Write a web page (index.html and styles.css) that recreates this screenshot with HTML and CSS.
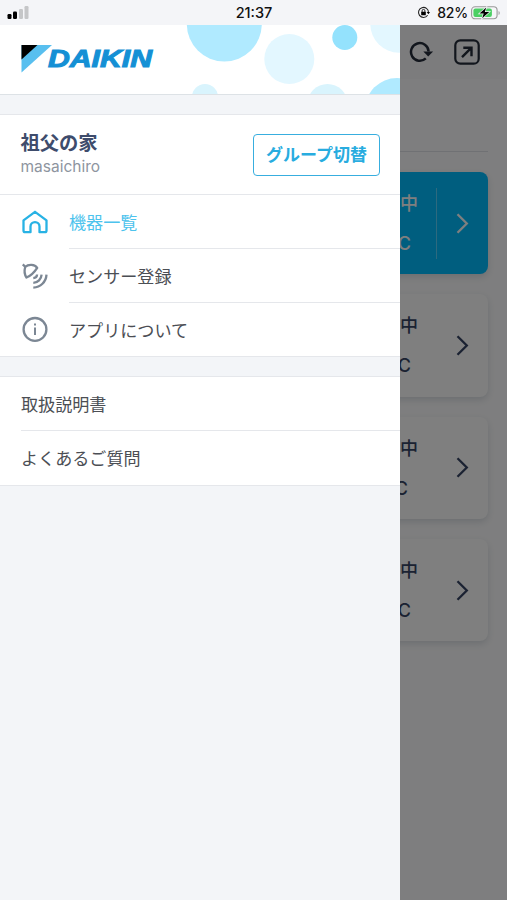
FILE: index.html
```html
<!DOCTYPE html>
<html lang="ja">
<head>
<meta charset="utf-8">
<title>DAIKIN</title>
<link rel="stylesheet" href="styles.css">
</head>
<body>
<div class="screen">
  <header class="status">
    <svg class="signal" width="24" height="14" viewBox="0 0 24 14"><rect x="0.5" y="8" width="4" height="5" rx="1.2"/><rect x="6" y="5.5" width="4" height="7.5" rx="1.2"/><rect class="off" x="12" y="3" width="4" height="10" rx="1.2"/><rect class="off" x="17.5" y="0" width="4" height="13" rx="1.2"/></svg>
    <span class="clock">21:37</span>
    <div class="power">
      <svg width="13" height="13" viewBox="0 0 13 13"><path d="M10.6 9.3A5 5 0 1 1 11.5 6.5" fill="none" stroke="#222" stroke-width="1.1"/><path d="M9.7 6h3.3l-1.6 2.3z"/><rect x="4.2" y="5.8" width="4.6" height="3.5" rx=".5"/><path d="M5.1 6V4.8a1.4 1.4 0 0 1 2.8 0V6" fill="none" stroke="#222"/></svg>
      <span class="percent">82%</span>
      <svg width="30" height="14" viewBox="0 0 30 14"><rect x=".6" y=".8" width="25.5" height="12" rx="3.5" fill="#f5f6f8" stroke="#999" stroke-width="1.1"/><rect x="2.4" y="2.6" width="18.5" height="8.4" rx="2" fill="#4bd064"/><path d="M27.5 5v4q1.4-.4 1.4-2t-1.4-2" fill="#aaa"/><path d="M15.2 1.6 8.5 7.6h4.2l-1.5 4.6 7-6.2h-4.4z" stroke="#f5f6f8" stroke-width="1.4" paint-order="stroke"/></svg>
    </div>
  </header>

  <div class="stage">
    <main class="app">
      <div class="toolbar">
        <svg width="26" height="24" viewBox="0 0 26 24" fill="none" stroke="#252c3a" stroke-width="2.5"><path d="M16.8 18.4A8.8 8.8 0 1 1 19.6 11.5"/><path d="M14.3 11.5h9.8l-4.9 5z" fill="#252c3a" stroke="none"/></svg>
        <svg class="open" width="26" height="26" viewBox="0 0 26 26" fill="none" stroke="#252c3a" stroke-width="2.2"><rect x="1.3" y="1.3" width="23.4" height="23.4" rx="5"/><path d="M8 18.2l9-9M9.3 8.7h8.2v8.5" stroke-width="2.4"/></svg>
      </div>
      <div class="heading"></div>
      <div class="cards">
        <section class="card active"><div class="reading"><span>中</span><span class="unit">C</span></div><div class="go"><svg width="14" height="22" viewBox="0 0 14 22"><path d="M1.5 1.2 10.8 10.5 1.5 19.8"/></svg></div></section>
        <section class="card"><div class="reading"><span>中</span><span class="unit">C</span></div><div class="go"><svg width="14" height="22" viewBox="0 0 14 22"><path d="M1.5 1.2 10.8 10.5 1.5 19.8"/></svg></div></section>
        <section class="card"><div class="reading"><span>中</span><span class="unit near">C</span></div><div class="go"><svg width="14" height="22" viewBox="0 0 14 22"><path d="M1.5 1.2 10.8 10.5 1.5 19.8"/></svg></div></section>
        <section class="card"><div class="reading"><span>中</span><span class="unit">C</span></div><div class="go"><svg width="14" height="22" viewBox="0 0 14 22"><path d="M1.5 1.2 10.8 10.5 1.5 19.8"/></svg></div></section>
      </div>
    </main>
    <div class="scrim"></div>

    <aside class="drawer">
      <div class="brand">
        <svg width="400" height="69" viewBox="0 0 400 69">
          <circle cx="224.3" cy="-1" r="37.5" fill="#b0eaff"/>
          <circle cx="289.3" cy="34" r="25" fill="#e3f7ff"/>
          <circle cx="344.8" cy="12.5" r="12.5" fill="#94e2fd"/>
          <circle cx="399" cy="-1" r="28.7" fill="#e3f7ff"/>
          <circle cx="205" cy="72" r="13" fill="#d9f4fd"/>
          <circle cx="327.5" cy="79" r="20" fill="#d9f4fd"/>
          <circle cx="397" cy="85" r="32" fill="#b0eaff"/>
          <path d="M21.5 20H52L21.5 47.5z" fill="#58bfef"/>
          <path d="M21.5 20H37.5L21.5 34.5z" fill="#000"/>
          <text class="wordmark" x="48" y="42.2" textLength="104" lengthAdjust="spacingAndGlyphs">DAIKIN</text>
        </svg>
      </div>
      <div class="profile">
        <div class="who"><strong>祖父の家</strong><span>masaichiro</span></div>
        <button class="switch">グループ切替</button>
      </div>
      <nav class="menu">
        <a class="item current"><svg width="28" height="28" viewBox="0 0 28 28"><path d="M2.5 12.3 14 3.8l11.5 8.5v10.2a1.7 1.7 0 0 1-1.7 1.7h-5.3v-5.6a4.5 4.5 0 0 0-9 0v5.6H4.2a1.7 1.7 0 0 1-1.7-1.7z"/></svg><span>機器一覧</span></a>
        <a class="item"><svg width="28" height="28" viewBox="0 0 28 28"><path d="M1.8 2.4 4.4 5M4.2 5C3.2 8.5 3.4 12.5 5.5 15.5 9 14 13.5 10 16.2 5.8 13.8 2.3 7.5 1.8 4.2 5zM12.3 16.2c2.2-.2 3.7-1.6 3.8-3.7M12.3 20.9c4.6-.2 8-3.7 8.3-8.2M12.3 25.6c7.2-.3 12.8-5.7 13.2-13"/></svg><span>センサー登録</span></a>
        <a class="item"><svg width="28" height="28" viewBox="0 0 28 28"><circle cx="14" cy="14.4" r="11.4"/><path d="M14 12.4v7.6M14 8.4v2.2" stroke-width="2"/></svg><span>アプリについて</span></a>
      </nav>
      <nav class="menu links">
        <a class="item"><span>取扱説明書</span></a>
        <a class="item"><span>よくあるご質問</span></a>
      </nav>
    </aside>
  </div>
</div>
</body>
</html>
```
FILE: styles.css
```css
* { box-sizing: border-box; }
body {
  margin: 0;
  font-family: Inter, "Noto Sans CJK JP", sans-serif;
  background: #f3f5f8;
}
.screen { width: 507px; height: 900px; display: flex; flex-direction: column; overflow: hidden; }

.status {
  flex: 0 0 25px;
  display: grid;
  grid-template-columns: 1fr auto 1fr;
  align-items: center;
  padding: 0 6px 0 7px;
  background: #f4f5f8;
  color: #111;
}
.signal .off { fill: #c5c6c8; }
.clock { font-size: 14.5px; font-weight: 500; line-height: 25px; }
.power { display: flex; justify-content: flex-end; align-items: center; }
.percent { font-size: 14px; font-weight: 500; margin: 0 3px 0 7px; letter-spacing: -.2px; }

.stage { flex: 1; position: relative; min-height: 0; overflow: hidden; }
.app { height: 100%; background: #fdfdfe; }
.scrim { position: absolute; inset: 0; background: rgba(0, 0, 0, .5); }

.toolbar {
  height: 54px;
  display: flex;
  justify-content: flex-end;
  align-items: center;
  gap: 19px;
  padding-right: 27px;
  background: #f8f9fb;
}
.heading { height: 73px; margin: 0 19px; border-bottom: 1px solid #e0e3e8; }
.cards { display: flex; flex-direction: column; gap: 20px; padding: 20px 19px 0; }
.card {
  height: 102.3px;
  display: flex;
  justify-content: flex-end;
  padding: 16px 0 15px;
  border-radius: 8px;
  background: #fefefe;
  box-shadow: 0 3px 7px rgba(40, 60, 90, .16);
  color: #364464;
}
.card.active { background: #00bdff; color: #fff; }
.reading {
  width: 60px;
  display: flex;
  flex-direction: column;
  align-items: flex-end;
  margin-right: 18px;
  font-size: 18px;
  font-weight: 500;
  line-height: 32px;
}
.unit { margin: 8px 7px 0 0; font-size: 18px; }
.unit.near { margin-right: 10px; }
.go {
  width: 52px;
  display: flex;
  align-items: center;
  padding-left: 19px;
  border-left: 1px solid transparent;
}
.active .go { border-color: #5bd5ff; }
.go path { fill: none; stroke: currentColor; stroke-width: 2.3; }

.drawer { position: absolute; top: 0; left: 0; bottom: 0; width: 399.5px; background: #f3f5f8; overflow: hidden; }
.brand { height: 70px; background: #fff; border-bottom: 1px solid #dde2e6; }
.brand svg { display: block; }
.wordmark {
  font: italic 700 23px "Liberation Sans", sans-serif;
  fill: #1490d5;
  stroke: #1490d5;
  stroke-width: 1;
}

.profile {
  height: 81px;
  margin-top: 19px;
  padding: 0 19.5px 0 20.5px;
  display: flex;
  justify-content: space-between;
  align-items: center;
  background: #fff;
  border-top: 1.5px solid #e5e7eb;
  border-bottom: 1px solid #e5e7eb;
}
.who { display: flex; flex-direction: column; }
.who strong { font-size: 19.3px; font-weight: 700; line-height: 24px; color: #3e4c6c; }
.who span { font-size: 15.5px; line-height: 24px; color: #8e959f; }
.switch {
  width: 127px;
  height: 42px;
  padding: 1px 0 0;
  border: 1.5px solid #38aedf;
  border-radius: 4px;
  background: #fff;
  color: #28acdf;
  font-family: inherit;
  font-size: 17px;
  font-weight: 700;
  line-height: 24px;
}

.menu { background: #fff; border-bottom: 1px solid #e5e7eb; }
.item { display: flex; align-items: center; height: 53.8px; padding-left: 21px; color: #4b4e54; font-size: 17.1px; }
.item svg { flex: none; margin-right: 20px; fill: none; stroke: #7c8794; stroke-width: 2.3; stroke-linejoin: round; }
.item span { flex: 1; height: 100%; line-height: 56px; border-bottom: 1px solid #e5e7eb; }
.item:last-child span { border-bottom: 0; }
.item.current { color: #4dc3ed; }
.item.current svg { stroke: #28b2e4; }
.links { margin-top: 19px; border-top: 1px solid #e5e7eb; }
```
